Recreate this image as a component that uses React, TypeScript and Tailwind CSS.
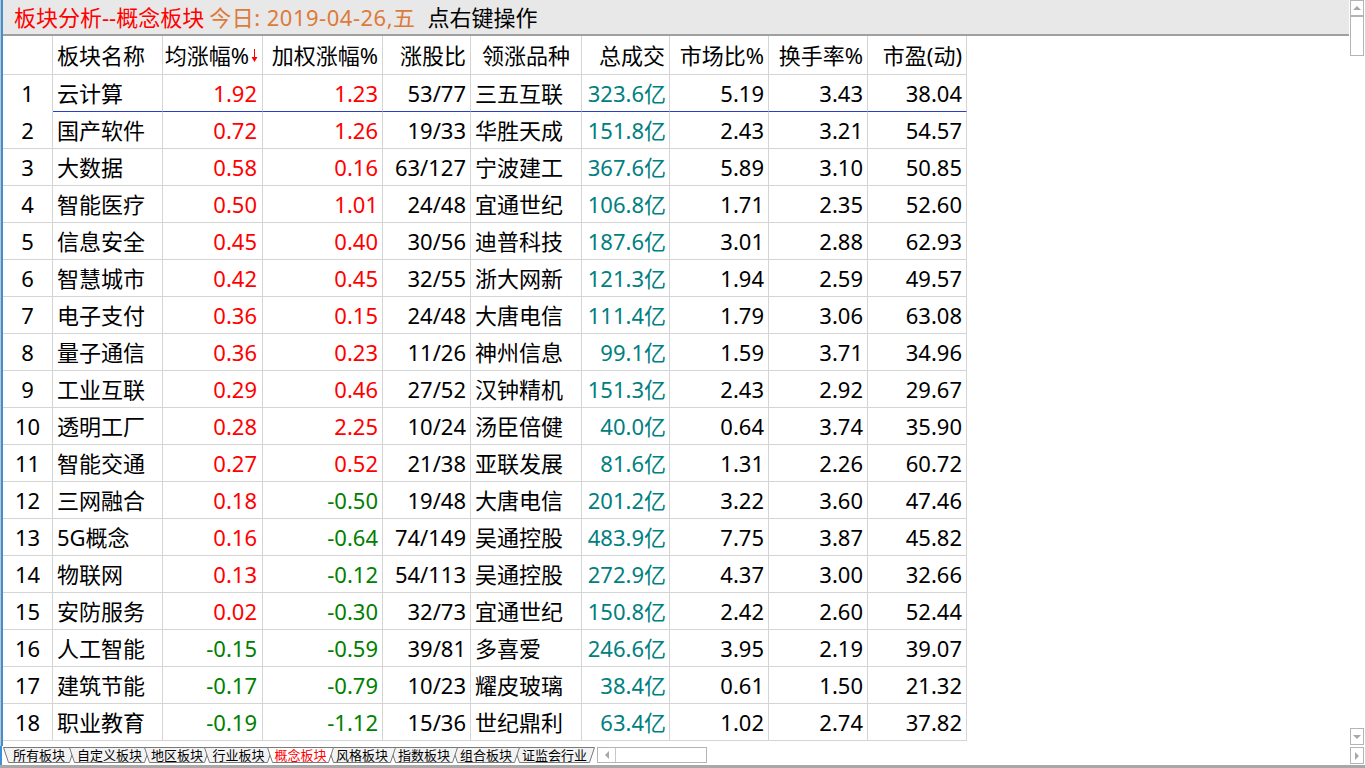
import React from "react"

type Row = [string, string, string, string, string, string, string, string, string]

const ROWS: Row[] = [
  ["云计算", "1.92", "1.23", "53/77", "三五互联", "323.6亿", "5.19", "3.43", "38.04"],
  ["国产软件", "0.72", "1.26", "19/33", "华胜天成", "151.8亿", "2.43", "3.21", "54.57"],
  ["大数据", "0.58", "0.16", "63/127", "宁波建工", "367.6亿", "5.89", "3.10", "50.85"],
  ["智能医疗", "0.50", "1.01", "24/48", "宜通世纪", "106.8亿", "1.71", "2.35", "52.60"],
  ["信息安全", "0.45", "0.40", "30/56", "迪普科技", "187.6亿", "3.01", "2.88", "62.93"],
  ["智慧城市", "0.42", "0.45", "32/55", "浙大网新", "121.3亿", "1.94", "2.59", "49.57"],
  ["电子支付", "0.36", "0.15", "24/48", "大唐电信", "111.4亿", "1.79", "3.06", "63.08"],
  ["量子通信", "0.36", "0.23", "11/26", "神州信息", "99.1亿", "1.59", "3.71", "34.96"],
  ["工业互联", "0.29", "0.46", "27/52", "汉钟精机", "151.3亿", "2.43", "2.92", "29.67"],
  ["透明工厂", "0.28", "2.25", "10/24", "汤臣倍健", "40.0亿", "0.64", "3.74", "35.90"],
  ["智能交通", "0.27", "0.52", "21/38", "亚联发展", "81.6亿", "1.31", "2.26", "60.72"],
  ["三网融合", "0.18", "-0.50", "19/48", "大唐电信", "201.2亿", "3.22", "3.60", "47.46"],
  ["5G概念", "0.16", "-0.64", "74/149", "吴通控股", "483.9亿", "7.75", "3.87", "45.82"],
  ["物联网", "0.13", "-0.12", "54/113", "吴通控股", "272.9亿", "4.37", "3.00", "32.66"],
  ["安防服务", "0.02", "-0.30", "32/73", "宜通世纪", "150.8亿", "2.42", "2.60", "52.44"],
  ["人工智能", "-0.15", "-0.59", "39/81", "多喜爱", "246.6亿", "3.95", "2.19", "39.07"],
  ["建筑节能", "-0.17", "-0.79", "10/23", "耀皮玻璃", "38.4亿", "0.61", "1.50", "21.32"],
  ["职业教育", "-0.19", "-1.12", "15/36", "世纪鼎利", "63.4亿", "1.02", "2.74", "37.82"],
]

const TABS = [
  { label: "所有板块", w: "w-[66px]" },
  { label: "自定义板块", w: "w-[75px]" },
  { label: "地区板块", w: "w-[60px]" },
  { label: "行业板块", w: "w-[63px]" },
  { label: "概念板块", w: "w-[61px]", active: true },
  { label: "风格板块", w: "w-[62px]" },
  { label: "指数板块", w: "w-[62px]" },
  { label: "组合板块", w: "w-[62px]" },
  { label: "证监会行业", w: "w-[75px]" },
]

// slant centre of each tab edge, x in px
const SEP = [6, 72, 147, 207, 270, 331, 393, 455, 517, 592]
const TAB_ORDER = [0, 1, 2, 3, 8, 7, 6, 5, 4]

const cell = "flex items-center border-r border-b border-[#d4d4d4] h-[37px]"
const sign = (v: string) => (v.startsWith("-") ? "text-[#008000]" : "text-[#ff0000]")

function Tri({ dir }: { dir: "up" | "down" | "left" | "right" }) {
  const pts = {
    up: "1,6 5,2 9,6",
    down: "1,2 5,6 9,2",
    left: "6,1 2,5 6,9",
    right: "2,1 6,5 2,9",
  }[dir]
  const vert = dir === "up" || dir === "down"
  return (
    <svg className={vert ? "w-[10px] h-[8px]" : "w-[8px] h-[10px]"} viewBox={vert ? "0 0 10 8" : "0 0 8 10"}>
      <polygon points={pts} fill="#a8a8a8" />
    </svg>
  )
}

function DownArrow() {
  return (
    <svg className="w-[7px] h-[15px] ml-[2px]" viewBox="0 0 7 15">
      <line x1="3.5" y1="1" x2="3.5" y2="12" stroke="#ff0000" strokeWidth="1" />
      <polygon points="0.5,9 6.5,9 3.5,14" fill="#ff0000" />
    </svg>
  )
}

export default function App() {
  return (
    <div className="w-[1366px] h-[768px] bg-white flex flex-col border-r border-[#d8d8d8] font-['Noto_Sans','Noto_Sans_CJK_SC',sans-serif] overflow-hidden">
      <div className="flex h-[746px]">
        <div className="w-[1349px] border-l border-[#c4c4c4]">
          <div className="h-full border-l-2 border-[#3d8fd6] flex flex-col">
            <div className="h-[36px] bg-[#e8e8e8] border-b-2 border-[#a0a0a0] flex items-center pl-[11px] text-[22px] leading-none">
              <span className="text-[#ff0000]">板块分析--概念板块</span>
              <span className="text-[#dd7a3a] ml-[5px] tracking-[0.5px]">今日: 2019-04-26,五</span>
              <span className="text-black ml-[12px]">点右键操作</span>
            </div>

            <div className="grid grid-cols-[50px_110px_100px_120px_88px_111px_88px_99px_99px_99px] w-[963px] text-[22px] leading-none text-black">
              <div className={`${cell} h-[39px]`} />
              <div className={`${cell} h-[39px] pl-[4px]`}>板块名称</div>
              <div className={`${cell} h-[39px] justify-end pr-[4px]`}>
                均涨幅%
                <DownArrow />
              </div>
              <div className={`${cell} h-[39px] justify-end pr-[4px]`}>加权涨幅%</div>
              <div className={`${cell} h-[39px] justify-end pr-[4px]`}>涨股比</div>
              <div className={`${cell} h-[39px] justify-center`}>领涨品种</div>
              <div className={`${cell} h-[39px] justify-end pr-[4px]`}>总成交</div>
              <div className={`${cell} h-[39px] justify-end pr-[4px]`}>市场比%</div>
              <div className={`${cell} h-[39px] justify-end pr-[4px]`}>换手率%</div>
              <div className={`${cell} h-[39px] justify-end pr-[4px]`}>市盈(动)</div>

              {ROWS.map((r, i) => {
                const sel = i === 0
                const b = sel ? "border-b-[#2b3fc4]" : ""
                return (
                  <React.Fragment key={i}>
                    <div className={`${cell} justify-center ${sel ? "border-b-white" : ""}`}>{i + 1}</div>
                    <div className={`${cell} ${b} pl-[4px]`}>{r[0]}</div>
                    <div className={`${cell} ${b} justify-end pr-[5px] ${sign(r[1])}`}>{r[1]}</div>
                    <div className={`${cell} ${b} justify-end pr-[4px] ${sign(r[2])}`}>{r[2]}</div>
                    <div className={`${cell} ${b} justify-end pr-[4px]`}>{r[3]}</div>
                    <div className={`${cell} ${b} pl-[4px]`}>{r[4]}</div>
                    <div className={`${cell} ${b} justify-end pr-[3px] text-[#008080]`}>{r[5]}</div>
                    <div className={`${cell} ${b} justify-end pr-[4px]`}>{r[6]}</div>
                    <div className={`${cell} ${b} justify-end pr-[4px]`}>{r[7]}</div>
                    <div className={`${cell} ${b} justify-end pr-[4px]`}>{r[8]}</div>
                  </React.Fragment>
                )
              })}
            </div>
          </div>
        </div>

        <div className="w-[16px] flex flex-col pl-[1px]">
          <div className="w-[14px] h-[16px] border border-[#b4b4b4] flex items-center justify-center">
            <Tri dir="up" />
          </div>
          <div className="w-[14px] h-[40px] border border-[#b4b4b4]" />
          <div className="flex-1" />
          <div className="w-[14px] h-[17px] border border-[#b4b4b4] flex items-center justify-center mb-[1px]">
            <Tri dir="down" />
          </div>
        </div>
      </div>

      <div className="h-[19px] flex">
        <div className="relative w-[597px] h-full border-l-2 border-[#3d8fd6]">
          <svg className="absolute left-0 top-[1px] w-[597px] h-[17px]" viewBox="0 0 597 17">
            {TAB_ORDER.map((i) => {
              const x0 = SEP[i] - 2
              const x1 = SEP[i + 1] - 2
              const active = TABS[i].active
              return (
                <polygon
                  key={i}
                  points={`${x0 - 2.5},0.5 ${x1 + 2.5},0.5 ${x1 - 2.5},15.5 ${x0 + 2.5},15.5`}
                  fill={active ? "#ffffff" : "#f3f3f3"}
                  stroke="#7a7a7a"
                  strokeWidth="1"
                />
              )
            })}
          </svg>
          <div className="relative flex pl-[4px] pt-[1px] h-[17px] items-center text-[13px] leading-none">
            {TABS.map((t) => (
              <div
                key={t.label}
                className={`${t.w} flex justify-center ${t.active ? "text-[#ff0000]" : "text-black"}`}
              >
                {t.label}
              </div>
            ))}
          </div>
        </div>

        <div className="w-[110px] h-[16px] mt-[1px] border border-[#b4b4b4] flex">
          <div className="w-[18px] h-full border-r border-[#c8c8c8] flex items-center justify-center">
            <Tri dir="left" />
          </div>
        </div>

        <div className="flex-1" />

        <div className="w-[14px] h-[17px] mt-[1px] mr-[1px] border border-[#b4b4b4] flex items-center justify-center">
          <Tri dir="right" />
        </div>
      </div>

      <div className="h-[3px] bg-[#a8a8a8]" />
    </div>
  )
}
